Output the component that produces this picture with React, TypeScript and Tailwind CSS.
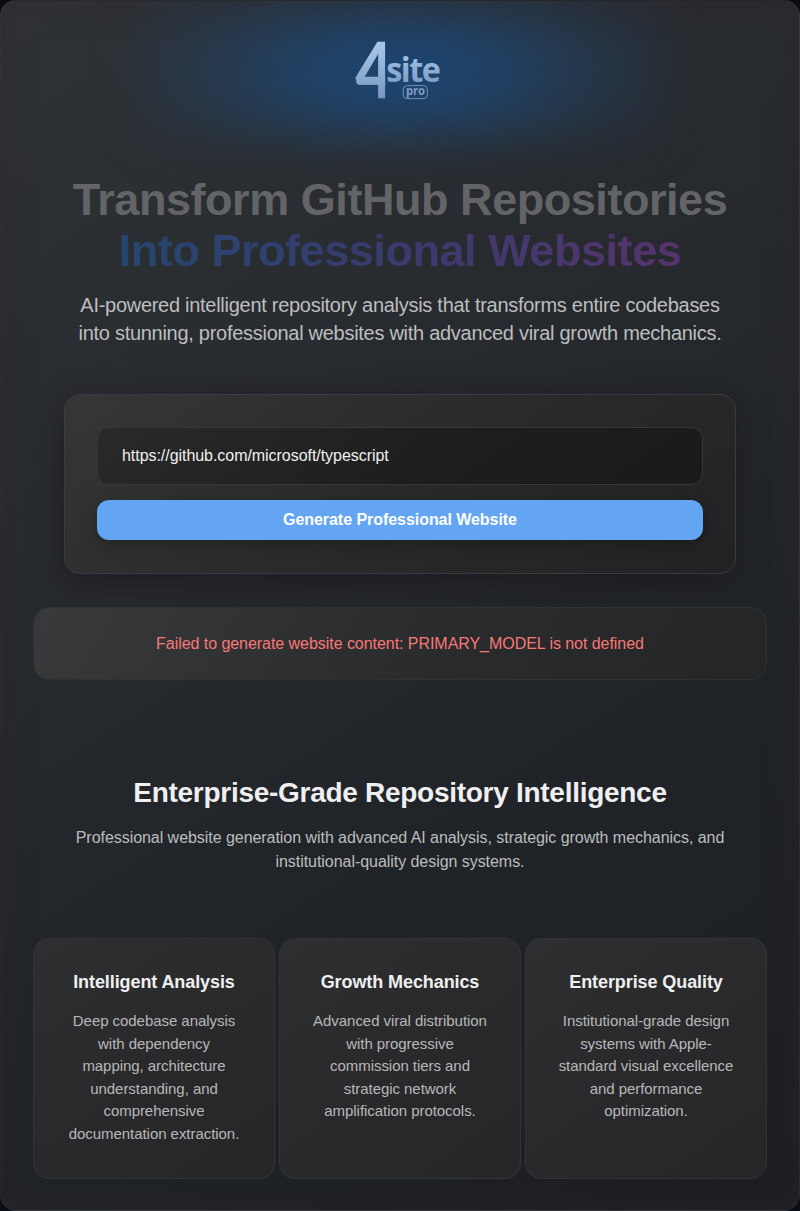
const features = [
  {
    title: 'Intelligent Analysis',
    body: 'Deep codebase analysis with dependency mapping, architecture understanding, and comprehensive documentation extraction.',
  },
  {
    title: 'Growth Mechanics',
    body: 'Advanced viral distribution with progressive commission tiers and strategic network amplification protocols.',
  },
  {
    title: 'Enterprise Quality',
    body: 'Institutional-grade design systems with Apple-standard visual excellence and performance optimization.',
  },
];

function Logo() {
  return (
    <svg width="96" height="64" viewBox="0 0 96 64" className="relative block overflow-visible" aria-label="4site pro">
      <defs>
        <linearGradient id="word-fill" gradientUnits="userSpaceOnUse" x1="0" y1="-27" x2="0" y2="0">
          <stop offset="0" stopColor="#a0c1e5" />
          <stop offset="1" stopColor="#7f9fc8" />
        </linearGradient>
        <linearGradient id="four-fill" gradientUnits="userSpaceOnUse" x1="0" y1="-55" x2="0" y2="0">
          <stop offset="0" stopColor="#a9c8e9" />
          <stop offset="1" stopColor="#7898c0" />
        </linearGradient>
        <clipPath id="four-clip">
          <rect x="0" y="0" width="33.2" height="64" />
        </clipPath>
      </defs>
      <g fontFamily="'Open Sans'" fontWeight="700">
        <g clipPath="url(#four-clip)">
          <text transform="translate(3.5 60) scale(0.84 1)" fontFamily="Lato" fontSize="76" fill="url(#four-fill)" stroke="url(#four-fill)" strokeWidth="0.5">4</text>
        </g>
        <text transform="translate(34.2 43.9) scale(0.94 1)" fontSize="34.5" letterSpacing="-1.6" fill="url(#word-fill)">site</text>
        <text transform="translate(53.9 57.2) scale(0.92 1)" fontSize="12.2" fill="#7d9bc2">pro</text>
      </g>
      <rect x="51.2" y="47.6" width="24.2" height="13" rx="4" fill="none" stroke="#7391b8" />
    </svg>
  );
}

export default function App() {
  return (
    <div className="h-[1211px] w-full bg-[#0b0d15] font-['Liberation_Sans',Arial,sans-serif] tracking-[-0.048px]">
      <main className="relative flex h-full flex-col overflow-hidden rounded-2xl border border-white/[0.04] bg-[linear-gradient(148deg,#303336_0%,#272a2e_35%,#202428_65%,#1c1e23_100%)] px-8 shadow-[inset_0_0_32px_rgba(46,40,44,0.5)]">
        <div className="relative flex h-[142px] shrink-0 justify-center pt-[37px]">
          <div className="absolute left-1/2 top-0 h-[142px] w-[530px] -translate-x-1/2 bg-[radial-gradient(ellipse_60%_90%_at_center,#1b4879_0%,rgba(29,70,114,0.75)_35%,rgba(34,64,98,0.35)_70%,rgba(36,56,82,0.05)_100%)] blur-[22px]" />
          <Logo />
        </div>

        <h1 className="mt-[31px] text-center text-[45px] font-bold leading-[51px] tracking-[-0.45px] text-[#636467]">
          <span className="block">Transform GitHub Repositories</span>
          <span className="mx-auto block w-fit bg-[linear-gradient(90deg,#25466f_0%,#393b6d_50%,#56336c_100%)] bg-clip-text text-transparent">
            Into Professional Websites
          </span>
        </h1>
        <p className="mt-[15px] text-center text-[20px] leading-7 tracking-[-0.28px] text-[#bdbebf]">
          AI-powered intelligent repository analysis that transforms entire codebases
          <br />
          into stunning, professional websites with advanced viral growth mechanics.
        </p>

        <section className="mx-[31px] mt-[47.2px] flex h-[180px] shrink-0 flex-col gap-[15px] rounded-2xl border border-[#3b3b3d] bg-[linear-gradient(145deg,#363637_0%,#29292a_55%,#222224_100%)] p-8 shadow-[0_8px_32px_rgba(18,16,25,0.45)]">
          <input
            className="h-[58px] shrink-0 rounded-xl border border-[#363637] bg-[linear-gradient(145deg,#292929_0%,#1e1e1e_55%,#1a1a1a_100%)] px-6 text-base tracking-[-0.048px] text-[#f0f0f0] outline-none"
            defaultValue="https://github.com/microsoft/typescript"
          />
          <button className="h-10 shrink-0 rounded-xl bg-[#63a4f3] text-base font-bold tracking-[-0.048px] text-white shadow-[0_4px_16px_rgba(0,0,0,0.25)]">
            Generate Professional Website
          </button>
        </section>

        <div className="mt-[33px] flex h-[73px] shrink-0 items-center justify-center rounded-2xl border border-[#303133] bg-[linear-gradient(120deg,#38393a_0%,#2a2b2c_55%,#242526_100%)] text-base text-[#f87878]">
          Failed to generate website content: PRIMARY_MODEL is not defined
        </div>

        <h2 className="mt-24 text-center text-[28px] font-bold leading-[34px] tracking-[-0.28px] text-[#efeff0]">
          Enterprise-Grade Repository Intelligence
        </h2>
        <p className="mt-4 text-center text-base leading-6 text-[#bcbdbe]">
          Professional website generation with advanced AI analysis, strategic growth mechanics, and
          <br />
          institutional-quality design systems.
        </p>

        <div className="mt-16 grid h-[241px] shrink-0 grid-cols-3 gap-1">
          {features.map((feature) => (
            <article
              key={feature.title}
              className="rounded-2xl border border-[#333436] bg-[linear-gradient(145deg,#2e2f30_0%,#29292b_55%,#262628_100%)] px-8 pt-8 text-center"
            >
              <h3 className="text-lg font-bold leading-[23px] tracking-[-0.09px] whitespace-nowrap text-[#efeff0]">{feature.title}</h3>
              <p className="mt-4 text-[15px] leading-[22.5px] text-[#b7b8b9]">{feature.body}</p>
            </article>
          ))}
        </div>
      </main>
    </div>
  );
}
